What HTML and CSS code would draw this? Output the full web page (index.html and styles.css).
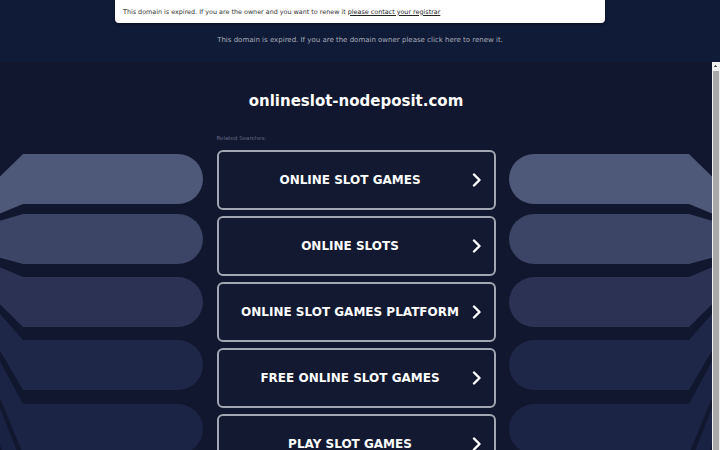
FILE: index.html
```html
<!DOCTYPE html>
<html lang="en">
<head>
<meta charset="utf-8">
<title>onlineslot-nodeposit.com</title>
<link rel="stylesheet" href="styles.css">
</head>
<body>
<header class="top">
  <div class="notice">This domain is expired. If you are the owner and you want to renew it&nbsp;<a class="notice-link" href="#">please contact your registrar</a></div>
  <p class="renew">This domain is expired. If you are the domain owner please click here to renew it.</p>
</header>
<main class="frame">
  <div class="page">
    <svg class="decor" width="712" height="640" viewBox="0 0 712 640" aria-hidden="true">
      <g class="fan">
        <path fill="#4e5878" d="M23 92H178A25 25 0 0 1 178 142H23L-65 178Z"/>
        <path fill="#3c4566" d="M23 152H178A25 25 0 0 1 178 202H23L-65 178Z"/>
        <path fill="#2b3253" d="M23 215H178A25 25 0 0 1 178 265H23L-65 178Z"/>
        <path fill="#1f2748" d="M23 278H178A25 25 0 0 1 178 328H23L-65 178Z"/>
        <path fill="#1c2446" d="M23 342H178A25 25 0 0 1 178 392H23L-65 178Z"/>
        <path fill="#1a2243" d="M23 405H178A25 25 0 0 1 178 455H23L-65 178Z"/>
      </g>
      <g class="fan" transform="matrix(-1 0 0 1 712 0)">
        <path fill="#4e5878" d="M23 92H178A25 25 0 0 1 178 142H23L-65 178Z"/>
        <path fill="#3c4566" d="M23 152H178A25 25 0 0 1 178 202H23L-65 178Z"/>
        <path fill="#2b3253" d="M23 215H178A25 25 0 0 1 178 265H23L-65 178Z"/>
        <path fill="#1f2748" d="M23 278H178A25 25 0 0 1 178 328H23L-65 178Z"/>
        <path fill="#1c2446" d="M23 342H178A25 25 0 0 1 178 392H23L-65 178Z"/>
        <path fill="#1a2243" d="M23 405H178A25 25 0 0 1 178 455H23L-65 178Z"/>
      </g>
    </svg>
    <h1 class="domain">onlineslot-nodeposit.com</h1>
    <section class="related">
      <p class="related-label">Related Searches:</p>
      <ul class="links">
        <li><a class="link" href="#"><span class="link-text">ONLINE SLOT GAMES</span><svg class="chev" width="10" height="14" viewBox="0 0 10 14"><path d="M2 1.5L7.5 7L2 12.5"/></svg></a></li>
        <li><a class="link" href="#"><span class="link-text">ONLINE SLOTS</span><svg class="chev" width="10" height="14" viewBox="0 0 10 14"><path d="M2 1.5L7.5 7L2 12.5"/></svg></a></li>
        <li><a class="link" href="#"><span class="link-text">ONLINE SLOT GAMES PLATFORM</span><svg class="chev" width="10" height="14" viewBox="0 0 10 14"><path d="M2 1.5L7.5 7L2 12.5"/></svg></a></li>
        <li><a class="link" href="#"><span class="link-text">FREE ONLINE SLOT GAMES</span><svg class="chev" width="10" height="14" viewBox="0 0 10 14"><path d="M2 1.5L7.5 7L2 12.5"/></svg></a></li>
        <li><a class="link" href="#"><span class="link-text">PLAY SLOT GAMES</span><svg class="chev" width="10" height="14" viewBox="0 0 10 14"><path d="M2 1.5L7.5 7L2 12.5"/></svg></a></li>
      </ul>
    </section>
  </div>
  <div class="scrollbar" aria-hidden="true">
    <div class="scroll-up"></div>
    <div class="scroll-thumb"></div>
  </div>
</main>
</body>
</html>
```
FILE: styles.css
```css
html,
body {
  margin: 0;
  height: 100%;
  overflow: hidden;
  background: #11172e;
  font-family: "DejaVu Sans", "Noto Sans", sans-serif;
}

/* expired-domain strip */
.top {
  height: 62px;
  background: #101b37;
  display: flex;
  flex-direction: column;
  align-items: center;
}

.notice {
  box-sizing: border-box;
  width: 490px;
  height: 23px;
  padding: 0 8px;
  display: flex;
  align-items: center;
  background: #ffffff;
  border-radius: 0 0 4px 4px;
  box-shadow: 0 1px 3px rgba(0, 0, 0, 0.45);
  font-size: 6.4px;
  color: #333333;
  white-space: nowrap;
}

.notice-link {
  color: #222222;
  text-decoration: underline;
}

.renew {
  margin: 13px 0 0;
  font-size: 7px;
  line-height: 8px;
  color: #a8adbb;
}

/* framed parked page with its own scrollbar */
.frame {
  display: flex;
  height: 600px;
}

.page {
  position: relative;
  width: 712px;
  height: 640px;
  flex: none;
  padding-top: 29px;
  box-sizing: border-box;
}

.scrollbar {
  flex: 1;
  display: flex;
  flex-direction: column;
  background: #f1f1f1;
}

.scroll-up {
  height: 9px;
  background:
    linear-gradient(to bottom right, transparent 50%, #505050 50%) 2px 3px / 2px 2px no-repeat,
    linear-gradient(to bottom left, transparent 50%, #505050 50%) 4px 3px / 2px 2px no-repeat;
}

.scroll-thumb {
  flex: 1;
  margin: 0 1px 20px;
  background: #a8a8a8;
}

.decor {
  position: absolute;
  top: 0;
  left: 0;
  z-index: 0;
}

.domain {
  position: relative;
  z-index: 1;
  margin: 0;
  text-align: center;
  font-size: 15px;
  line-height: 20px;
  font-weight: bold;
  color: #ffffff;
}

.related {
  position: relative;
  z-index: 1;
  width: 279px;
  margin: 0 auto;
}

.related-label {
  margin: 24px 0 9px;
  font-size: 5.5px;
  line-height: 6px;
  color: #646a82;
}

.links {
  list-style: none;
  margin: 0;
  padding: 0;
  display: flex;
  flex-direction: column;
  gap: 6px;
}

.link {
  box-sizing: border-box;
  height: 60px;
  padding: 0 12px 0 20px;
  display: flex;
  align-items: center;
  background: #121931;
  border: 2px solid #a2a6b3;
  border-radius: 6px;
  color: #ffffff;
  text-decoration: none;
  font-size: 12px;
  font-weight: bold;
}

.link-text {
  flex: 1;
  text-align: center;
}

.chev {
  margin-left: 10px;
  fill: none;
  stroke: #ffffff;
  stroke-width: 2.4;
  stroke-linecap: round;
  stroke-linejoin: round;
}
```
